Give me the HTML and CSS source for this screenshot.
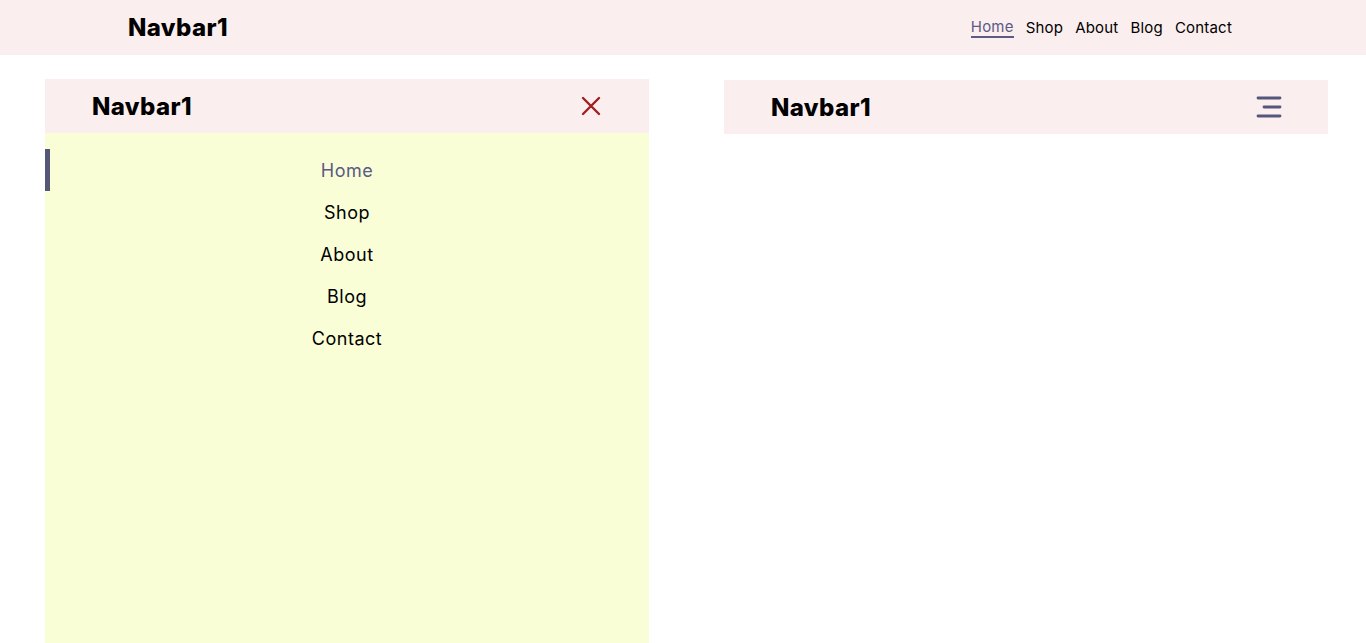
FILE: index.html
```html
<!DOCTYPE html>
<html lang="en">
<head>
<meta charset="utf-8">
<title>Navbar1</title>
<link rel="stylesheet" href="styles.css">
</head>
<body>
<header class="topbar">
  <div class="logo">Navbar1</div>
  <nav class="top-links">
    <a class="active" href="#">Home</a>
    <a href="#">Shop</a>
    <a href="#">About</a>
    <a href="#">Blog</a>
    <a href="#">Contact</a>
  </nav>
</header>
<main class="demos">
  <section class="panel">
    <div class="panel-head">
      <div class="logo">Navbar1</div>
      <button class="icon-btn close" aria-label="Close">
        <svg width="20" height="20" viewBox="0 0 20 20"><path d="M2 2L18 18M18 2L2 18" stroke="#a01f22" stroke-width="2.4" stroke-linecap="round"/></svg>
      </button>
    </div>
    <ul class="menu">
      <li class="active"><a href="#">Home</a></li>
      <li><a href="#">Shop</a></li>
      <li><a href="#">About</a></li>
      <li><a href="#">Blog</a></li>
      <li><a href="#">Contact</a></li>
    </ul>
  </section>
  <section class="panel closed">
    <div class="panel-head">
      <div class="logo">Navbar1</div>
      <button class="icon-btn burger" aria-label="Menu">
        <svg width="26" height="22" viewBox="0 0 26 22"><path d="M2 2H24M8 11H24M2 20H24" stroke="#54567a" stroke-width="2.8" stroke-linecap="round"/></svg>
      </button>
    </div>
  </section>
</main>
</body>
</html>
```
FILE: styles.css
```css
* { box-sizing: border-box; }
html, body { margin: 0; padding: 0; }
body {
  font-family: "Inter", "Noto Sans", sans-serif;
  background: #fff;
  color: #000;
  overflow: hidden;
  height: 643px;
}
a { color: inherit; text-decoration: none; }
.topbar {
  height: 55px;
  background: #fbeeee;
  display: flex;
  align-items: center;
  justify-content: space-between;
  padding: 0 134px 0 128px;
}
.logo {
  font-weight: 800;
  font-size: 24px;
  letter-spacing: 0.4px;
}
.top-links {
  display: flex;
  gap: 12px;
  font-size: 15px;
  letter-spacing: 0.2px;
  padding-top: 1px;
}
.top-links a.active {
  color: #5a5a84;
  border-bottom: 2px solid #5a5a84;
  line-height: 18px;
}
.demos {
  display: grid;
  grid-template-columns: 604px 604px;
  column-gap: 75px;
  padding: 24px 0 0 45px;
  align-items: start;
}
.panel { height: 570px; background: #f9fed7; }
.panel.closed { background: transparent; margin-top: 1px; }
.panel-head {
  height: 54px;
  background: #fbeeee;
  display: flex;
  align-items: center;
  justify-content: space-between;
  padding: 0 46px 0 47px;
}
.icon-btn {
  border: 0;
  background: none;
  padding: 0;
  display: flex;
}
.close { margin-right: 2px; }
.menu {
  list-style: none;
  margin: 0;
  padding: 16px 0 0;
  font-size: 18px;
  letter-spacing: 0.5px;
}
.menu li {
  height: 42px;
  display: flex;
  align-items: center;
  justify-content: center;
  border-left: 5px solid transparent;
  padding-right: 5px;
}
.menu li.active { border-left-color: #555779; color: #5a5a84; }
```
